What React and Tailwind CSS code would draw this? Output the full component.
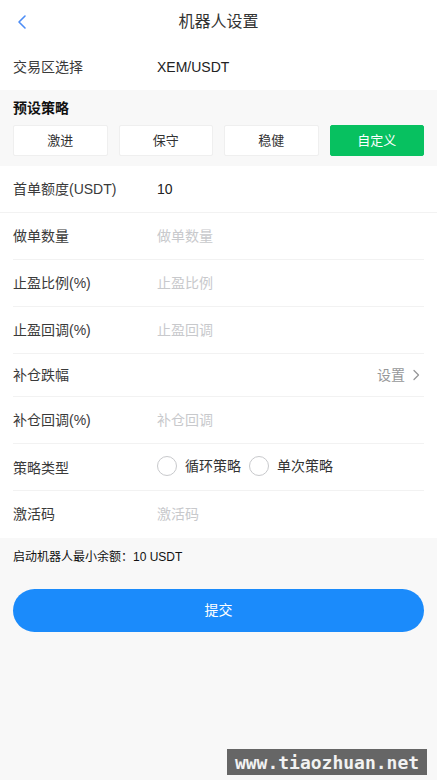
import React, { useState } from "react";

const presets = ["激进", "保守", "稳健", "自定义"];

// Helper for a plain form row: label + input
const FieldRow = ({ label, placeholder, value, full }) => (
  <div className={`flex h-[47px] items-center ${full ? "pl-[13px]" : "mx-[13px]"} border-b border-[#f2f2f2]`}>
    <span className="w-[144px] shrink-0 text-[14px] text-[#3a3a3a]">{label}</span>
    <input
      defaultValue={value}
      placeholder={placeholder}
      className="min-w-0 flex-1 bg-transparent text-[14px] text-[#222] outline-none placeholder:text-[#c8c9cc]"
    />
  </div>
);

const Radio = ({ label, checked, onClick }) => (
  <button onClick={onClick} className="flex items-center">
    <span
      className={`h-[20px] w-[20px] rounded-full border ${
        checked ? "border-[#1989fa] bg-[#1989fa]" : "border-[#c8c9cc] bg-white"
      }`}
    />
    <span className="ml-[8px] text-[14px] text-[#333]">{label}</span>
  </button>
);

export default function App() {
  const [preset, setPreset] = useState(3);
  const [type, setType] = useState(null);

  return (
    <div
      className="relative min-h-[780px] bg-[#f8f8f8]"
      style={{ fontFamily: '"Liberation Sans", "Noto Sans CJK SC", sans-serif' }}
    >
      {/* Header */}
      <header className="relative flex h-[44px] items-center justify-center bg-white">
        <button className="absolute left-[14px] top-[12px] p-[2px]">
          <svg width="12" height="16" viewBox="0 0 12 16" fill="none">
            <path d="M9 2L3 8l6 6" stroke="#4d8df6" strokeWidth="1.6" strokeLinecap="round" strokeLinejoin="round" />
          </svg>
        </button>
        <h1 className="text-[16px] text-[#333]">机器人设置</h1>
      </header>

      {/* Exchange pair */}
      <div className="bg-white">
        <div className="mx-[13px] flex h-[46px] items-center">
          <span className="w-[144px] text-[14px] text-[#3a3a3a]">交易区选择</span>
          <span className="text-[14px] text-[#222]">XEM/USDT</span>
        </div>
      </div>

      {/* Presets */}
      <section className="px-[13px] pb-[10px] pt-[9px]">
        <h2 className="text-[14px] font-bold leading-[18px] text-[#111]">预设策略</h2>
        <div className="mt-[8px] grid grid-cols-4 gap-[11px]">
          {presets.map((p, i) => (
            <button
              key={p}
              onClick={() => setPreset(i)}
              className={`h-[31px] rounded-[2px] border text-[13px] ${
                preset === i
                  ? "border-[#07c160] bg-[#07c160] text-white"
                  : "border-[#efefef] bg-white text-[#333]"
              }`}
            >
              {p}
            </button>
          ))}
        </div>
      </section>

      {/* Form */}
      <div className="bg-white">
        <FieldRow label="首单额度(USDT)" value="10" full />
        <FieldRow label="做单数量" placeholder="做单数量" />
        <FieldRow label="止盈比例(%)" placeholder="止盈比例" />
        <FieldRow label="止盈回调(%)" placeholder="止盈回调" />
        <div className="mx-[13px] flex h-[43px] items-center justify-between border-b border-[#f2f2f2]">
          <span className="text-[14px] text-[#3a3a3a]">补仓跌幅</span>
          <button className="mr-[4px] flex items-center text-[14px] text-[#969799]">
            设置
            <svg className="ml-[7px]" width="8" height="12" viewBox="0 0 8 12" fill="none">
              <path d="M2 1.5l4.5 4.5L2 10.5" stroke="#969799" strokeWidth="1.3" strokeLinecap="round" strokeLinejoin="round" />
            </svg>
          </button>
        </div>
        <FieldRow label="补仓回调(%)" placeholder="补仓回调" />
        <div className="mx-[13px] flex h-[47px] items-center border-b border-[#f2f2f2]">
          <span className="w-[144px] pt-[3px] text-[14px] text-[#3a3a3a]">策略类型</span>
          <div className="-mt-[2px] flex items-center gap-[8px]">
            <Radio label="循环策略" checked={type === 0} onClick={() => setType(0)} />
            <Radio label="单次策略" checked={type === 1} onClick={() => setType(1)} />
          </div>
        </div>
        <div className="mx-[13px] flex h-[47px] items-center">
          <span className="w-[144px] shrink-0 text-[14px] text-[#3a3a3a]">激活码</span>
          <input
            placeholder="激活码"
            className="min-w-0 flex-1 bg-transparent text-[14px] outline-none placeholder:text-[#c8c9cc]"
          />
        </div>
      </div>

      {/* Minimum balance + submit */}
      <p className="px-[13px] pt-[12px] text-[12px] leading-[14px] text-[#111]">启动机器人最小余额：10 USDT</p>
      <div className="px-[13px] pt-[25px]">
        <button className="h-[43px] w-full rounded-full bg-[#1b8bfb] text-[14px] text-white">提交</button>
      </div>

      {/* Watermark */}
      <div
        className="absolute left-[227px] top-[749px] flex h-[26px] w-[200px] items-center justify-center bg-[#666] text-[18px] font-bold text-[#f2f2f2]"
        style={{ fontFamily: '"DejaVu Sans Mono", monospace' }}
      >
        www.tiaozhuan.net
      </div>
    </div>
  );
}
